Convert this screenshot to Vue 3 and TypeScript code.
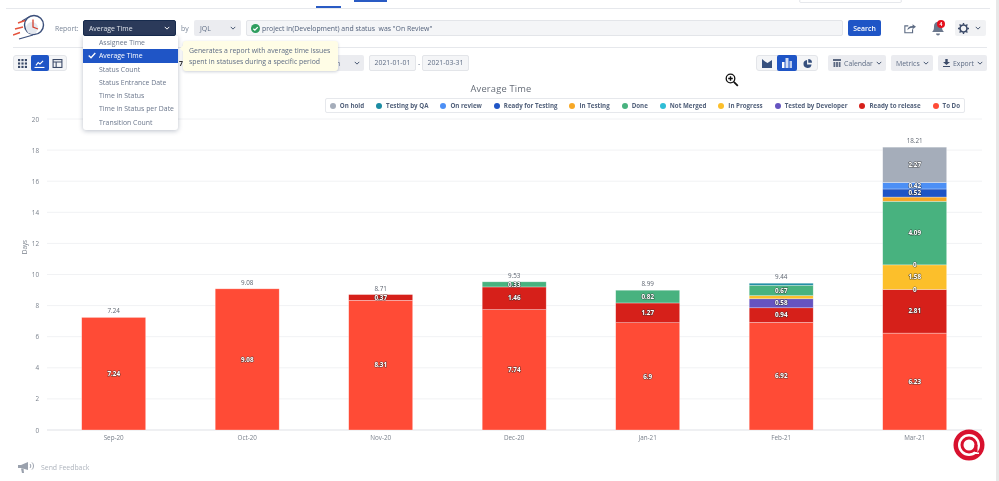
<script setup lang="ts">
interface Seg { v: number; label: string; color: string }
const C = { hold: '#a5adba', qa: '#1c8ca3', rev: '#4c8ff5', rft: '#1f55c6', test: '#f7a826', done: '#48b27f', prog: '#fcbf2b', rel: '#d6201a', todo: '#ff4b36', dev: '#6554c0' }
const bars: { name: string; total: string; segs: Seg[] }[] = [
  { name: 'Sep-20', total: '7.24', segs: [{ v: 7.24, label: '7.24', color: C.todo }] },
  { name: 'Oct-20', total: '9.08', segs: [{ v: 9.08, label: '9.08', color: C.todo }] },
  { name: 'Nov-20', total: '8.71', segs: [{ v: 8.34, label: '8.31', color: C.todo }, { v: 0.37, label: '0.37', color: C.rel }] },
  { name: 'Dec-20', total: '9.53', segs: [{ v: 7.74, label: '7.74', color: C.todo }, { v: 1.46, label: '1.46', color: C.rel }, { v: 0.33, label: '0.33', color: C.done }] },
  { name: 'Jan-21', total: '8.99', segs: [{ v: 6.9, label: '6.9', color: C.todo }, { v: 1.27, label: '1.27', color: C.rel }, { v: 0.82, label: '0.82', color: C.done }] },
  { name: 'Feb-21', total: '9.44', segs: [{ v: 6.92, label: '6.92', color: C.todo }, { v: 0.94, label: '0.94', color: C.rel }, { v: 0.58, label: '0.58', color: C.dev }, { v: 0.2, label: '', color: C.prog }, { v: 0.67, label: '0.67', color: C.done }, { v: 0.13, label: '', color: C.qa }] },
  { name: 'Mar-21', total: '18.21', segs: [{ v: 6.23, label: '6.23', color: C.todo }, { v: 2.81, label: '2.81', color: C.rel }, { v: 0, label: '0', color: C.rel }, { v: 1.58, label: '1.58', color: C.prog }, { v: 0, label: '0', color: C.prog }, { v: 4.09, label: '4.09', color: C.done }, { v: 0.27, label: '', color: C.test }, { v: 0.52, label: '0.52', color: C.rft }, { v: 0.42, label: '0.42', color: C.rev }, { v: 2.27, label: '2.27', color: C.hold }] },
]
const Y0 = 316
const unit = 311 / 20
const ticks = Array.from({ length: 11 }, (_, i) => i * 2)
const drawn = bars.map((b, i) => {
  let acc = 0
  const x = 34.7 + i * 133.5
  const rects = b.segs.map((s) => {
    const y = Y0 - (acc + s.v) * unit
    const h = s.v * unit
    acc += s.v
    return { ...s, x, y, h, cy: y + h / 2 + 2.2 }
  })
  return { ...b, x, cx: x + 32, top: Y0 - acc * unit, rects }
})
const legend = [
  ['On hold', '#a5adba'], ['Testing by QA', '#1c8ca3'], ['On review', '#4c8ff5'], ['Ready for Testing', '#1f55c6'], ['In Testing', '#f7a826'], ['Done', '#48b27f'],
  ['Not Merged', '#2fbdd6'], ['In Progress', '#fcbf2b'], ['Tested by Developer', '#6554c0'], ['Ready to release', '#d6201a'], ['To Do', '#ff4b36'],
]
const menu = ['Assignee Time', 'Average Time', 'Status Count', 'Status Entrance Date', 'Time in Status', 'Time in Status per Date', 'Transition Count']
const query = 'project in(Development) and status  was "On Review"'
</script>

<template>
  <div class="page">
    <div class="tabs">
      <span class="tab tab-a"></span>
      <span class="tab tab-b"></span>
      <span class="tabbox"></span>
    </div>

    <header class="row1">
      <svg class="logo" width="32" height="28" viewBox="13 14 32 28" fill="none">
        <path d="M22 21l7-4M19 39l14-4" stroke="#3b4f7a" stroke-width="1.300" />
        <circle cx="34" cy="25" r="9.500" stroke="#3b4f7a" stroke-width="1.400" fill="#fff" />
        <circle cx="32" cy="28" r="6" fill="#e4e8ef" />
        <path d="M33 19.500V27l5 2" stroke="#d6402f" stroke-width="1.300" />
        <path d="M18 23l7-2.500M15 29l8-2M13 35l7-2.500" stroke="#e5533d" stroke-width="1.400" />
      </svg>
      <span class="lbl report-lbl">Report:</span>
      <div class="select dark">Average Time<svg class="chev" viewBox="0 0 8 5"><path d="M1 1l3 3 3-3" /></svg></div>
      <span class="lbl by">by</span>
      <div class="select jql">JQL<svg class="chev" viewBox="0 0 8 5"><path d="M1 1l3 3 3-3" /></svg></div>
      <div class="query">
        <svg width="9" height="9" viewBox="0 0 10 10"><circle cx="5" cy="5" r="5" fill="#2f9e5f" /><path d="M2.600 5.200l1.700 1.700 3.200-3.400" stroke="#fff" stroke-width="1.400" fill="none" /></svg>
        <span>{{ query }}</span>
      </div>
      <button class="search">Search</button>
      <svg class="share" width="12" height="11" viewBox="0 0 14 12" fill="none"><path d="M10 7v4H1V3h4" stroke="#5e6c84" stroke-width="1.300" /><path d="M4 8c0-3 2-5 6-5V1l4 3-4 3V5C7 5 5.500 6 4 8z" fill="#5e6c84" /></svg>
      <div class="bell">
        <svg width="14" height="15" viewBox="0 0 14 15"><path d="M7 1c3 0 4 2 4 5 0 3 1 4 2 5H1c1-1 2-2 2-5 0-3 1-5 4-5z" fill="#6b778c" /><path d="M5 12.500a2 2 0 004 0z" fill="#6b778c" /></svg>
        <span class="badge">4</span>
      </div>
      <div class="gear">
        <svg width="11" height="11" viewBox="0 0 12 12" fill="none"><circle cx="6" cy="6" r="3.800" stroke="#3b4a68" stroke-width="1.800" /><path d="M6 0v2M6 10v2M0 6h2M10 6h2M1.700 1.700l1.400 1.400M8.900 8.900l1.400 1.400M1.700 10.300l1.400-1.400M8.900 3.100l1.400-1.400" stroke="#3b4a68" stroke-width="1.500" /></svg>
        <svg class="chev" viewBox="0 0 8 5"><path d="M1 1l3 3 3-3" /></svg>
      </div>
    </header>

    <section class="row2">
      <div class="group left">
        <span class="gbtn"><svg width="9" height="9" viewBox="0 0 10 10" fill="#3b4a68"><rect x="0" y="0" width="2.400" height="2.400" /><rect x="3.800" y="0" width="2.400" height="2.400" /><rect x="7.600" y="0" width="2.400" height="2.400" /><rect x="0" y="3.800" width="2.400" height="2.400" /><rect x="3.800" y="3.800" width="2.400" height="2.400" /><rect x="7.600" y="3.800" width="2.400" height="2.400" /><rect x="0" y="7.600" width="2.400" height="2.400" /><rect x="3.800" y="7.600" width="2.400" height="2.400" /><rect x="7.600" y="7.600" width="2.400" height="2.400" /></svg></span>
        <span class="gbtn on"><svg width="11" height="9" viewBox="0 0 11 10" fill="none" stroke="#fff" stroke-width="1.200"><path d="M0 9.400h11" /><path d="M1.500 7l2.500-3 2 1.500L9.500 2" /></svg></span>
        <span class="gbtn"><svg width="11" height="9" viewBox="0 0 11 10" fill="none" stroke="#3b4a68" stroke-width="1.200"><rect x=".6" y=".6" width="9.800" height="8.800" /><path d="M.6 3.400h9.800M4 3.400v6" /></svg></span>
      </div>
      <span class="seven">7</span>
      <div class="select period">n<svg class="chev" viewBox="0 0 8 5"><path d="M1 1l3 3 3-3" /></svg></div>
      <span class="date">2021-01-01</span>
      <span class="dash">-</span>
      <span class="date second">2021-03-31</span>
      <span class="grow"></span>
      <svg class="cursor" width="14" height="14" viewBox="0 0 14 14" fill="none"><circle cx="5.500" cy="5.500" r="4.300" stroke="#111" stroke-width="1.300" /><path d="M3.200 5.500h4.600M5.500 3.200v4.600" stroke="#111" stroke-width="1.400" /><path d="M8.800 8.800l4 4" stroke="#111" stroke-width="1.800" /></svg>
      <div class="group kinds">
        <span class="kbtn"><svg width="10" height="9" viewBox="0 0 10 9" fill="#36507e"><path d="M0 0l3 2.500L5.500 4 10 1v8H0z" /></svg></span>
        <span class="kbtn on"><svg width="10" height="10" viewBox="0 0 10 10" fill="#fff"><rect x="0" y="4" width="2.500" height="6" /><rect x="3.500" y="0" width="3" height="10" opacity=".8" /><rect x="7.500" y="3" width="2.500" height="7" opacity=".7" /></svg></span>
        <span class="kbtn"><svg width="9" height="9" viewBox="0 0 10 10" fill="#36507e"><path d="M4.500 1v5h5a4.500 4.500 0 11-5-5z" /><path d="M5.800 0a4.200 4.200 0 014.200 4.200H5.800z" /></svg></span>
      </div>
      <div class="tool cal"><svg width="8" height="8" viewBox="0 0 8 8" fill="#5a6780"><rect x="0" y="0" width="8" height="2" /><rect x=".5" y="3" width="1.800" height="5" /><rect x="3.100" y="3" width="1.800" height="5" /><rect x="5.700" y="3" width="1.800" height="5" /></svg>Calendar<svg class="chev" viewBox="0 0 8 5"><path d="M1 1l3 3 3-3" /></svg></div>
      <div class="tool met">Metrics<svg class="chev" viewBox="0 0 8 5"><path d="M1 1l3 3 3-3" /></svg></div>
      <div class="tool exp"><svg width="7" height="8" viewBox="0 0 7 8" fill="#3b4a68"><path d="M2.300 0h2.400v3H7L3.500 6 0 3h2.300z" /><rect x="0" y="7" width="7" height="1" /></svg>Export<svg class="chev" viewBox="0 0 8 5"><path d="M1 1l3 3 3-3" /></svg></div>
    </section>

    <h1 class="title">Average Time</h1>

    <div class="legend-wrap">
      <ul class="legend">
        <li v-for="l in legend" :key="l[0]"><i :style="{ background: l[1] }"></i>{{ l[0] }}</li>
      </ul>
    </div>

    <svg class="chart" width="990" height="335" viewBox="0 0 990 335">
      <g transform="translate(47 0)">
        <line v-for="t in ticks" :key="t" x1="0" x2="935" :y1="Y0 - t * unit" :y2="Y0 - t * unit" :stroke="t === 0 ? '#dfe1e6' : '#f1f2f4'" />
        <text v-for="t in ticks" :key="'t' + t" x="-8" :y="Y0 - t * unit + 2.500" class="axis" text-anchor="end">{{ t }}</text>
        <g v-for="b in drawn" :key="b.name">
          <rect v-for="(r, i) in b.rects" :key="i" :x="b.x" :y="r.y" width="64" :height="r.h" :fill="r.color" stroke="#fff" stroke-opacity=".5" stroke-width=".6" />
          <text v-for="(r, i) in b.rects" :key="'l' + i" :x="b.cx" :y="r.cy" class="val" text-anchor="middle">{{ r.label }}</text>
          <text :x="b.cx" :y="b.top - 4" class="total" text-anchor="middle">{{ b.total }}</text>
          <text :x="b.cx" y="326" class="axis" text-anchor="middle">{{ b.name }}</text>
        </g>
      </g>
      <text x="27" y="133" class="axis" text-anchor="middle" transform="rotate(-90 27 133)">Days</text>
    </svg>

    <footer class="feedback">
      <svg width="17" height="13" viewBox="0 0 17 13" fill="#9aa1ad"><path d="M0 4h3l7-3v8L3 7H0z" /><path d="M3 7.500h2.500L6 12H4z" /><path d="M12 3c1 1 1 3 0 4M14 1.500c2 2 2 5 0 7" stroke="#9aa1ad" fill="none" /></svg>
      <span>Send Feedback</span>
    </footer>

    <div class="menu">
      <div v-for="m in menu" :key="m" class="item" :class="{ sel: m === 'Average Time' }">
        <svg v-if="m === 'Average Time'" class="tick" width="8" height="7" viewBox="0 0 8 7" fill="none"><path d="M.7 3.500l2.300 2.300L7.300 1" stroke="#fff" stroke-width="1.300" /></svg>{{ m }}
      </div>
    </div>
    <div class="tip">Generates a report with average time issues<br />spent in statuses during a specific period</div>

    <svg class="chat" width="32" height="32" viewBox="0 0 32 32" fill="none">
      <circle cx="16" cy="16" r="15.500" fill="#d8112e" />
      <circle cx="16" cy="16" r="11" fill="#fff" />
      <circle cx="16" cy="16" r="8.500" fill="#d8112e" />
      <circle cx="16" cy="16" r="5.500" fill="#fff" />
      <path d="M21.500 16v7h3v-7z" fill="#d8112e" />
      <path d="M21 23.500h5v1.500h-5z" fill="#fff" />
    </svg>
    <div class="edge"></div>
  </div>
</template>

<style>
html, body { margin: 0; background: #fff; }
</style>

<style scoped>
.page { position: relative; width: 999px; height: 481px; overflow: hidden; background: #fff; font-family: "Open Sans", "Noto Sans", sans-serif; font-size: 6.900px; color: #5e6c84; display: flex; flex-direction: column; filter: blur(.35px); }
.tabs { position: relative; height: 8px; margin: 0 9px 0 6px; border-bottom: 1px solid #e6e8ec; flex: none; }
.tab { position: absolute; background: #2a5bc4; }
.tab-a { left: 310px; top: 6px; width: 25px; height: 2px; }
.tab-b { left: 348px; top: 0; width: 33px; height: 2px; }
.tabbox { position: absolute; left: 793px; top: -1px; width: 101px; height: 2px; border: 1px solid #e6e8ec; border-radius: 2px; }
.row1 { display: flex; align-items: center; height: 38px; margin: 0 12px 0 13px; border-bottom: 1px solid #e6e8ec; flex: none; }
.row1 > * { flex: none; }
.logo { margin-right: 10px; }
.lbl { color: #7a8698; }
.report-lbl { width: 28px; }
.select { display: flex; align-items: center; justify-content: space-between; height: 16px; border-radius: 2px; box-sizing: border-box; padding: 0 5px; background: #ebecf0; color: #5e6c84; flex: none; }
.dark { width: 93px; background: #2b3a5a; color: #dfe3ea; border: 1px solid #172b4d; }
.dark .chev path { stroke: #fff; }
.by { width: 8px; margin: 0 5px; }
.jql { width: 47px; padding-left: 6px; }
.query { display: flex; align-items: center; gap: 2px; margin-left: 5px; width: 597px; height: 16px; box-sizing: border-box; background: #f4f5f7; border: 1px solid #e3e5e9; border-radius: 2px; padding-left: 4px; color: #505f79; white-space: pre; }
.search { width: 33px; height: 16px; margin-left: 5px; padding: 0; border: 0; border-radius: 2px; background: #1f55c6; color: #fff; font: 600 6.900px "Open Sans", sans-serif; }
.share { margin-left: 23px; }
.bell { position: relative; margin-left: 15px; width: 14px; height: 15px; }
.badge { position: absolute; left: 6px; top: -1px; width: 8px; height: 8px; line-height: 8px; border-radius: 50%; background: #e5101d; color: #fff; font-size: 5px; font-weight: 700; text-align: center; }
.gear { display: flex; align-items: center; justify-content: space-between; width: 31px; height: 16px; margin-left: 10px; padding: 0 5px 0 3px; box-sizing: border-box; background: #f1f2f4; border-radius: 2px; }
.chev { width: 6px; height: 4px; flex: none; fill: none; }
.chev path { stroke: #42526e; stroke-width: 1.300; }
.row2 { display: flex; align-items: center; height: 30px; margin: 0 12px 0 13px; flex: none; }
.row2 > * { flex: none; }
.group { display: flex; align-items: center; height: 16px; box-sizing: border-box; background: #f4f5f7; border: 1px solid #e3e5e9; border-radius: 3px; }
.left { width: 54px; }
.gbtn { display: flex; align-items: center; justify-content: center; flex: 1; height: 16px; border-radius: 2px; }
.gbtn.on, .kbtn.on { background: #1f55c6; }
.seven { margin-left: 112px; color: #333; font-weight: 700; width: 4px; }
.period { width: 35px; margin-left: 146px; padding: 0 4px 0 7px; }
.date { width: 47px; height: 16px; box-sizing: border-box; line-height: 14px; margin-left: 5px; text-align: center; background: #f4f5f7; border: 1px solid #e3e5e9; border-radius: 2px; color: #5e6c84; }
.dash { margin: 0 0 0 2px; width: 3px; }
.second { margin-left: 1px; }
.grow { flex: 1; }
.cursor { position: absolute; left: 725px; top: 73px; }
.kinds { margin-right: 10px; width: 62px; }
.kbtn { display: flex; align-items: center; justify-content: center; width: 20px; height: 16px; border-radius: 2px; }
.tool { display: flex; align-items: center; justify-content: space-between; height: 16px; padding: 0 4px 0 5px; background: #ebecf0; border-radius: 2px; color: #5e6c84; box-sizing: border-box; margin-left: 5px; white-space: nowrap; }
.cal { margin-left: 0; width: 58px; }
.met { width: 42px; }
.exp { width: 49px; }
.title { margin: 3px 0 0 3px; height: 15px; font-size: 9.300px; line-height: 15px; font-weight: 400; color: #666d78; text-align: center; letter-spacing: .2px; flex: none; }
.legend-wrap { display: flex; justify-content: flex-end; height: 16px; margin-right: 34px; margin-top: 2px; flex: none; }
.legend { display: flex; align-items: center; gap: 12px; margin: 0; padding: 0 4px 0 4px; list-style: none; height: 15px; box-sizing: border-box; border: 1px solid #e6e8ec; border-radius: 2px; font-size: 6.200px; font-weight: 700; color: #505f79; white-space: nowrap; }
.legend li { display: flex; align-items: center; gap: 4px; }
.legend i { width: 6px; height: 6px; border-radius: 50%; }
.chart { display: block; flex: none; margin-top: 0; }
.axis { font: 6.300px "Open Sans", sans-serif; fill: #7a818c; }
.total { font: 6.300px "Open Sans", sans-serif; fill: #5e6570; }
.val { font: 700 6.300px "Open Sans", sans-serif; fill: #fff; stroke: rgba(50, 50, 50, .7); stroke-width: 1.100px; paint-order: stroke; }
.feedback { position: absolute; left: 18px; top: 461px; display: flex; align-items: center; gap: 6px; color: #aeb4bd; }
.menu { position: absolute; left: 83px; top: 36px; width: 95px; height: 94px; box-sizing: border-box; background: #fff; border-radius: 0 0 3px 3px; box-shadow: 0 1px 5px rgba(9, 30, 66, .28); }
.item { position: relative; height: 13.300px; line-height: 13.300px; padding-left: 16px; color: #6b778c; white-space: nowrap; }
.item.sel { background: #1f55c6; color: #fff; }
.tick { position: absolute; left: 5px; top: 3px; }
.tip { position: absolute; left: 183px; top: 41px; width: 155px; height: 30px; box-sizing: border-box; padding: 5px 0 0 6px; line-height: 10.500px; background: #fffde6; border-radius: 3px; box-shadow: 0 1px 3px rgba(9, 30, 66, .2); color: #5e6c84; white-space: nowrap; }
.tip::before { content: ""; position: absolute; left: -2px; top: 5px; width: 5px; height: 5px; background: #fffde6; transform: rotate(45deg); }
.chat { position: absolute; left: 953px; top: 429px; }
.edge { position: absolute; right: 0; top: 0; width: 3px; height: 100%; background: #e8e8e8; }
</style>
